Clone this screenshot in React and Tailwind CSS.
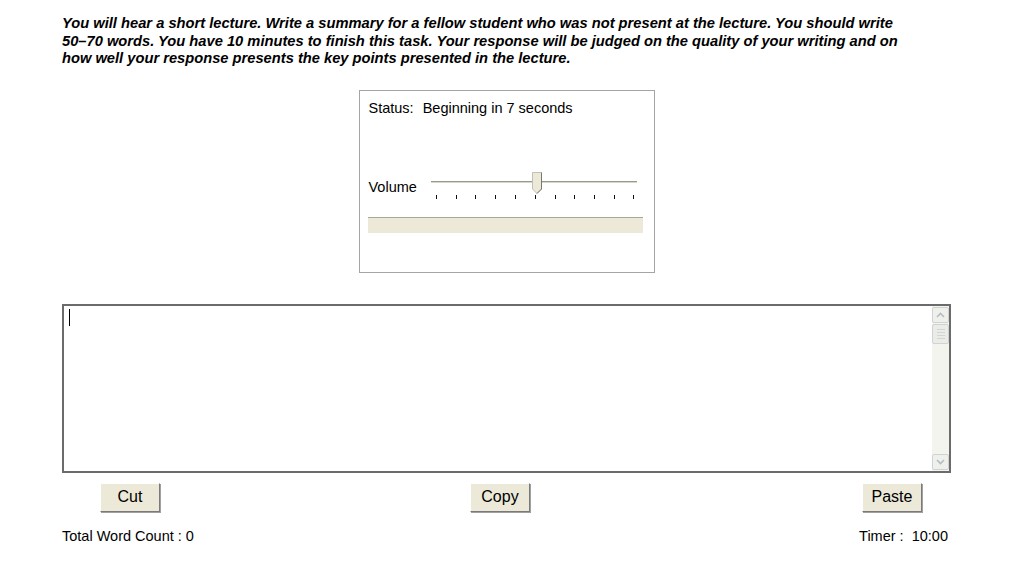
import React from 'react';

const ticks = [7, 27, 46, 66, 86, 106, 126, 145, 165, 185, 204];

const Slider = () => (
  <svg width="212" height="32" viewBox="0 0 212 32" className="block">
    <line x1="2" y1="13.5" x2="208" y2="13.5" stroke="#9a9a8a" strokeWidth="1" />
    <line x1="2" y1="14.5" x2="208" y2="14.5" stroke="#d6d6cc" strokeWidth="1" />
    {ticks.map((x) => (
      <line key={x} x1={x + 0.5} y1="27" x2={x + 0.5} y2="31" stroke="#111" strokeWidth="1" />
    ))}
    <path d="M103.5 4.5 H112.5 V21 L108 25.5 L103.5 21 Z" fill="#ece9d8" stroke="#c2c0b2" strokeWidth="1" />
    <path d="M112.5 4.5 V21 L108 25.5" fill="none" stroke="#7a786c" strokeWidth="1" />
  </svg>
);

const XpButton = ({ children, className = '' }) => (
  <button
    className={`h-[29px] w-[60px] bg-[#ece9d8] border border-t-white border-l-white border-r-[#7a7a7a] border-b-[#7a7a7a] shadow-[1px_1px_0_#a0a0a0] text-[16px] text-black leading-none ${className}`}
  >
    {children}
  </button>
);

const ScrollArrow = ({ up }) => (
  <div className="h-[16px] w-[17px] rounded-[2px] border border-[#cdd3da] bg-[#f0f0ea] flex items-center justify-center">
    <svg width="9" height="6" viewBox="0 0 9 6">
      <path d={up ? 'M1 5 L4.5 1.5 L8 5' : 'M1 1 L4.5 4.5 L8 1'} fill="none" stroke="#b4bcc6" strokeWidth="1.6" />
    </svg>
  </div>
);

export default function App() {
  return (
    <div className="w-[1025px] h-[566px] bg-white font-['Liberation_Sans',Arial,sans-serif] text-black overflow-hidden">
      <div className="ml-[62px] w-[889px] pt-[15px]">
        <p className="text-[14.7px] leading-[17.5px] font-bold italic whitespace-nowrap">
          You will hear a short lecture. Write a summary for a fellow student who was not present at the lecture. You should write
          <br />
          50–70 words. You have 10 minutes to finish this task. Your response will be judged on the quality of your writing and on
          <br />
          how well your response presents the key points presented in the lecture.
        </p>

        <div className="mx-auto mt-[22px] w-[296px] h-[183px] border border-[#a5a5a5] pl-[9px] pt-[8px]">
          <div className="flex items-baseline text-[14.5px] leading-[18px]">
            <span>Status:</span>
            <span className="ml-[9px]">Beginning in 7 seconds</span>
          </div>
          <div className="mt-[51px] flex items-start">
            <span className="text-[14.5px] leading-[18px] mt-[10px]">Volume</span>
            <div className="ml-[12px]">
              <Slider />
            </div>
          </div>
          <div className="mt-[17px] -ml-[1px] w-[275px] h-[16px] bg-[#ece9d8] border-t border-[#a8a89a]"></div>
        </div>

        <div className="mt-[31px] h-[169px] border-2 border-[#6b6b6b] flex">
          <div className="flex-1 pl-[5px] pt-[3px]">
            <div className="w-px h-[17px] bg-black"></div>
          </div>
          <div className="w-[17px] bg-[#f4f4ef] flex flex-col justify-between py-px">
            <div>
              <ScrollArrow up />
              <div className="mt-px h-[20px] w-[17px] rounded-[2px] border border-[#cdd3da] bg-[#ecece6] flex flex-col items-center justify-center gap-[2px]">
                <div className="w-[8px] h-px bg-[#d0d5da]"></div>
                <div className="w-[8px] h-px bg-[#d0d5da]"></div>
                <div className="w-[8px] h-px bg-[#d0d5da]"></div>
                <div className="w-[8px] h-px bg-[#d0d5da]"></div>
              </div>
            </div>
            <ScrollArrow />
          </div>
        </div>

        <div className="mt-[10px] flex">
          <XpButton className="ml-[38px]">Cut</XpButton>
          <XpButton className="ml-[310px]">Copy</XpButton>
          <XpButton className="ml-auto mr-[29px]">Paste</XpButton>
        </div>

        <div className="mt-[15px] flex justify-between text-[14.5px] leading-[18px]">
          <span>Total Word Count : 0</span>
          <span className="mr-[3px]">Timer :&nbsp;&nbsp;10:00</span>
        </div>
      </div>
    </div>
  );
}
